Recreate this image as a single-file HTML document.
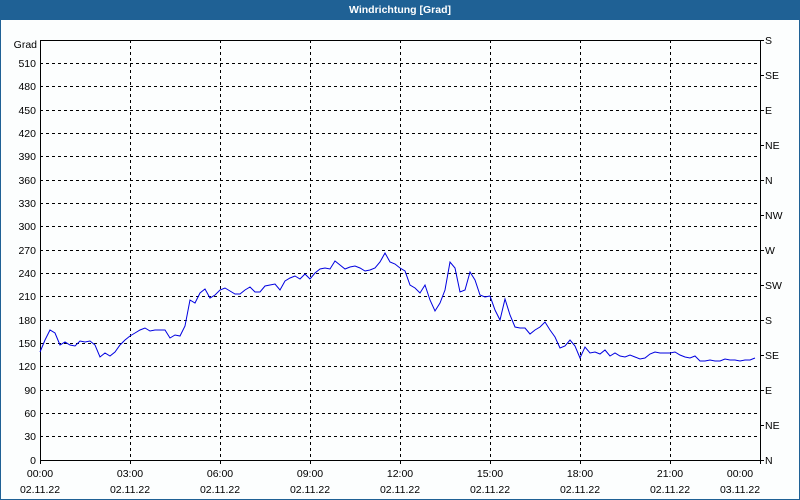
<!DOCTYPE html>
<html><head><meta charset="utf-8"><style>
html,body{margin:0;padding:0;width:800px;height:500px;overflow:hidden;background:#fcfefe;font-family:"Liberation Sans",Tahoma,sans-serif}
svg text{font-family:"Liberation Sans",sans-serif;font-size:10.5px;fill:#000}
</style></head><body>
<svg width="800" height="500" xmlns="http://www.w3.org/2000/svg">
<rect x="0" y="0" width="800" height="500" fill="#fcfefe"/>
<rect x="0" y="0" width="800" height="20" fill="#1f6195"/>
<rect x="0" y="0" width="1" height="500" fill="#1f6195"/>
<rect x="799" y="0" width="1" height="500" fill="#1f6195"/>
<rect x="0" y="499" width="800" height="1" fill="#1f6195"/>
<text x="400" y="13" text-anchor="middle" style="fill:#fff;font-weight:bold;font-size:10.5px">Windrichtung [Grad]</text>
<g stroke="#000" stroke-width="1" stroke-dasharray="3,3" shape-rendering="crispEdges">
<line x1="40" y1="63.5" x2="760" y2="63.5"/><line x1="40" y1="86.5" x2="760" y2="86.5"/><line x1="40" y1="110.5" x2="760" y2="110.5"/><line x1="40" y1="133.5" x2="760" y2="133.5"/><line x1="40" y1="156.5" x2="760" y2="156.5"/><line x1="40" y1="180.5" x2="760" y2="180.5"/><line x1="40" y1="203.5" x2="760" y2="203.5"/><line x1="40" y1="226.5" x2="760" y2="226.5"/><line x1="40" y1="250.5" x2="760" y2="250.5"/><line x1="40" y1="273.5" x2="760" y2="273.5"/><line x1="40" y1="296.5" x2="760" y2="296.5"/><line x1="40" y1="320.5" x2="760" y2="320.5"/><line x1="40" y1="343.5" x2="760" y2="343.5"/><line x1="40" y1="366.5" x2="760" y2="366.5"/><line x1="40" y1="390.5" x2="760" y2="390.5"/><line x1="40" y1="413.5" x2="760" y2="413.5"/><line x1="40" y1="436.5" x2="760" y2="436.5"/>
<line x1="130.5" y1="40" x2="130.5" y2="460"/><line x1="220.5" y1="40" x2="220.5" y2="460"/><line x1="310.5" y1="40" x2="310.5" y2="460"/><line x1="400.5" y1="40" x2="400.5" y2="460"/><line x1="490.5" y1="40" x2="490.5" y2="460"/><line x1="580.5" y1="40" x2="580.5" y2="460"/><line x1="670.5" y1="40" x2="670.5" y2="460"/>
</g>
<rect x="40.5" y="40.5" width="720" height="420" fill="none" stroke="#000" shape-rendering="crispEdges"/>
<g stroke="#000" shape-rendering="crispEdges">
<line x1="130.5" y1="460" x2="130.5" y2="464"/><line x1="220.5" y1="460" x2="220.5" y2="464"/><line x1="310.5" y1="460" x2="310.5" y2="464"/><line x1="400.5" y1="460" x2="400.5" y2="464"/><line x1="490.5" y1="460" x2="490.5" y2="464"/><line x1="580.5" y1="460" x2="580.5" y2="464"/><line x1="670.5" y1="460" x2="670.5" y2="464"/><line x1="40.5" y1="460" x2="40.5" y2="464"/><line x1="760.5" y1="460" x2="760.5" y2="464"/>
<line x1="760" y1="40.5" x2="764" y2="40.5"/><line x1="760" y1="75.5" x2="764" y2="75.5"/><line x1="760" y1="110.5" x2="764" y2="110.5"/><line x1="760" y1="145.5" x2="764" y2="145.5"/><line x1="760" y1="180.5" x2="764" y2="180.5"/><line x1="760" y1="215.5" x2="764" y2="215.5"/><line x1="760" y1="250.5" x2="764" y2="250.5"/><line x1="760" y1="285.5" x2="764" y2="285.5"/><line x1="760" y1="320.5" x2="764" y2="320.5"/><line x1="760" y1="355.5" x2="764" y2="355.5"/><line x1="760" y1="390.5" x2="764" y2="390.5"/><line x1="760" y1="425.5" x2="764" y2="425.5"/><line x1="760" y1="460.5" x2="764" y2="460.5"/>
</g>
<g text-anchor="end">
<text x="37" y="48">Grad</text>
<text x="36" y="67">510</text><text x="36" y="90">480</text><text x="36" y="114">450</text><text x="36" y="137">420</text><text x="36" y="160">390</text><text x="36" y="184">360</text><text x="36" y="207">330</text><text x="36" y="230">300</text><text x="36" y="254">270</text><text x="36" y="277">240</text><text x="36" y="300">210</text><text x="36" y="324">180</text><text x="36" y="347">150</text><text x="36" y="370">120</text><text x="36" y="394">90</text><text x="36" y="417">60</text><text x="36" y="440">30</text><text x="36" y="464">0</text>
</g>
<g>
<text x="765" y="44">S</text><text x="765" y="79">SE</text><text x="765" y="114">E</text><text x="765" y="149">NE</text><text x="765" y="184">N</text><text x="765" y="219">NW</text><text x="765" y="254">W</text><text x="765" y="289">SW</text><text x="765" y="324">S</text><text x="765" y="359">SE</text><text x="765" y="394">E</text><text x="765" y="429">NE</text><text x="765" y="464">N</text>
</g>
<g text-anchor="middle">
<text x="40" y="477">00:00</text><text x="130" y="477">03:00</text><text x="220" y="477">06:00</text><text x="310" y="477">09:00</text><text x="400" y="477">12:00</text><text x="490" y="477">15:00</text><text x="580" y="477">18:00</text><text x="670" y="477">21:00</text><text x="740" y="477">00:00</text>
<text x="40" y="493">02.11.22</text><text x="130" y="493">02.11.22</text><text x="220" y="493">02.11.22</text><text x="310" y="493">02.11.22</text><text x="400" y="493">02.11.22</text><text x="490" y="493">02.11.22</text><text x="580" y="493">02.11.22</text><text x="670" y="493">02.11.22</text><text x="740" y="493">03.11.22</text>
</g>
<polyline fill="none" stroke="#0000e0" stroke-width="1" points="40,352 45,340 50,330 55,333 60,345 65,342 70,345 75,346 80,341 85,342 90,341 95,345 100,357 105,353 110,356 115,352 120,345 125,340 130,336 135,333 140,330 145,328 150,331 155,330 160,330 165,330 170,338 175,335 180,336 185,326 190,300 195,303 200,293 205,289 210,298 215,295 220,290 225,288 230,291 235,294 240,294 245,290 250,287 255,292 260,292 265,286 270,285 275,284 280,290 285,281 290,278 295,276 300,279 305,274 310,279 315,273 320,269 325,268 330,269 335,261 340,265 345,269 350,267 355,266 360,268 365,271 370,270 375,268 380,262 385,253 390,262 395,264 400,268 405,271 410,285 415,288 420,293 425,285 430,300 435,311 440,303 445,290 450,262 455,268 460,292 465,290 470,272 475,280 480,295 485,297 490,296 495,310 500,320 505,299 510,315 515,327 520,328 525,328 530,334 535,330 540,327 545,322 550,330 555,337 560,348 565,346 570,340 575,346 580,358 585,347 590,353 595,352 600,354 605,350 610,356 615,353 620,356 625,357 630,355 635,357 640,359 645,358 650,354 655,352 660,353 665,353 670,353 675,352 680,355 685,357 690,358 695,356 700,361 705,361 710,360 715,361 720,361 725,359 730,360 735,360 740,361 745,360 750,360 755,358"/>
</svg>
</body></html>
